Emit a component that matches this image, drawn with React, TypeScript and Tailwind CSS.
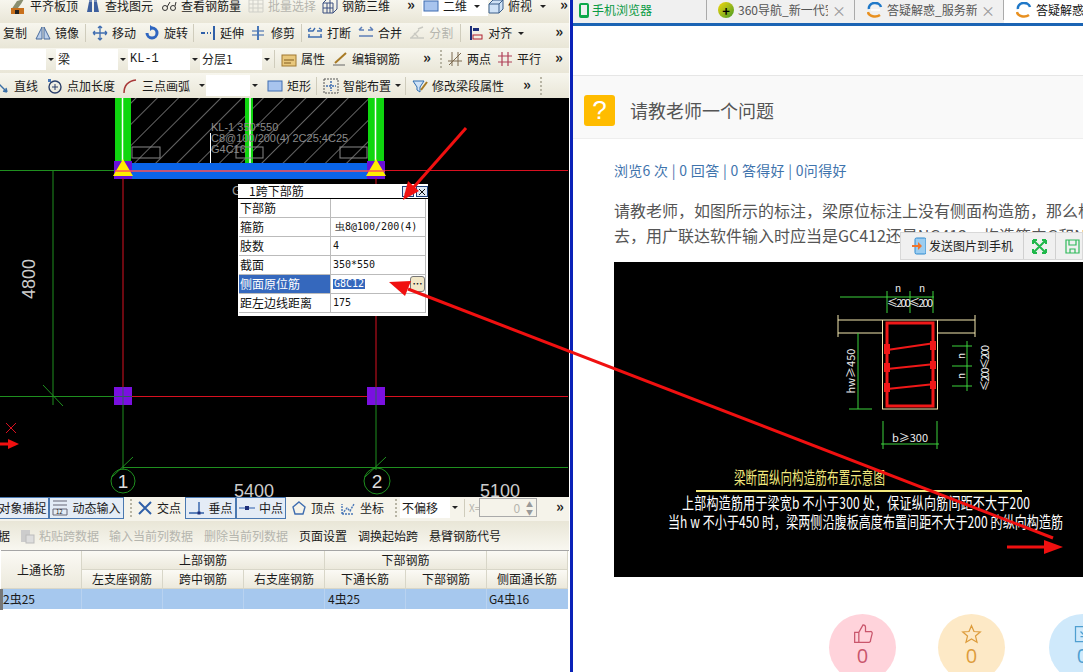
import React from "react";

const cjk = "font-['Noto_Sans_CJK_SC','Liberation_Sans',sans-serif]";

const Svg = ({ children }: { children: React.ReactNode }) => (
  <svg width="16" height="16" viewBox="0 0 16 16" fill="none" className="shrink-0">
    {children}
  </svg>
);

const icons: Record<string, React.ReactNode> = {
  level: (<><path d="M1 12l6-9 7-2-3 5-6 8z" fill="#8a8f70" /><rect x="1" y="10" width="13" height="6" fill="#c8701c" /><rect x="5" y="12" width="4" height="4" fill="#222" /></>),
  binoc: (<><path d="M2 14l2-10h3v10zM9 14V4h3l2 10z" fill="#3d5f9e" /><rect x="4" y="1" width="3" height="3" fill="#7c92bd" /><rect x="9" y="1" width="3" height="3" fill="#7c92bd" /></>),
  glasses: (<><circle cx="4" cy="10" r="2.5" stroke="#333" /><circle cx="12" cy="10" r="2.5" stroke="#333" /><path d="M6 9l3-5M14 8l1-4" stroke="#333" /></>),
  gridOff: (<path d="M1 2h14v12H1zM1 6h14M1 10h14M5 2v12M10 2v12" stroke="#cfcfc8" />),
  rebar3d: (<path d="M1 5h10v10H1zM1 5l4-4h10v10l-4 4M5 5v10M8 1v14M1 10h10" stroke="#3a4f80" />),
  mirror: (<><path d="M7 2v12H1zM9 2v12h6z" stroke="#486a9c" fill="#bcd0ea" /></>),
  move: (<path d="M8 1v14M1 8h14M8 1L6 3M8 1l2 2M8 15l-2-2M8 15l2-2M1 8l2-2M1 8l2 2M15 8l-2-2M15 8l-2 2" stroke="#3f6db0" strokeWidth="1.3" />),
  rotate: (<><path d="M8 3a5 5 0 1 1-5 5" stroke="#2f66c0" strokeWidth="3" /><path d="M6 0v6l4-3z" fill="#2f66c0" /></>),
  extend: (<><path d="M1 8h4M7 8h1M10 8h1" stroke="#2f5fa8" strokeWidth="2" /><path d="M14 1v14" stroke="#2f5fa8" strokeWidth="2" /></>),
  trim: (<><path d="M1 6h12M1 10h12" stroke="#2f5fa8" /><path d="M7 1v14" stroke="#4a78b8" strokeWidth="2" /></>),
  breakLine: (<path d="M1 6h5l2-3M15 6h-5M1 12h14M2 9v3M14 9v3M1 5l3-2M15 5l-3-2" stroke="#3f6db0" strokeWidth="1.4" />),
  merge: (<path d="M1 5h5M10 5h5M1 11h14M1 5l3-3M15 5l-3-3" stroke="#5d7fb8" strokeWidth="1.5" />),
  split: (<path d="M1 13h14M2 13l8-8M5 8l4 4M9 4l5-2" stroke="#c9c9c2" strokeWidth="1.4" />),
  align: (<><path d="M3 1v14" stroke="#1d2f7a" strokeWidth="2" /><rect x="5" y="3" width="6" height="3" fill="#1d2f7a" /><rect x="5" y="10" width="9" height="4" stroke="#b02030" /></>),
  attr: (<><rect x="1" y="4" width="14" height="11" fill="#e8c77c" stroke="#a07830" /><path d="M3 9h10M3 12h7" stroke="#805c20" /></>),
  edit: (<><path d="M1 14h12" stroke="#666" /><path d="M3 12L14 2" stroke="#a87a24" strokeWidth="2" /></>),
  twoPt: (<path d="M2 14L14 2M5 1v14M11 1v14M1 10h14" stroke="#7c6a50" />),
  parallel: (<path d="M1 5h14M1 11h14M5 1v14M11 1v14" stroke="#b04058" strokeWidth="1.2" />),
  line: (<path d="M1 2l12 12M13 14l-4-1M13 14l-1-4" stroke="#3a6ea5" strokeWidth="1.4" />),
  addLen: (<><circle cx="8" cy="9" r="6" stroke="#2a3f6a" strokeWidth="1.4" /><path d="M8 6v6M5 9h6" stroke="#2a3f6a" /><rect x="1" y="1" width="3" height="3" fill="#4a78b8" /></>),
  arc: (<path d="M2 15C2 7 6 3 14 2" stroke="#a83838" strokeWidth="1.5" />),
  rect: (<rect x="1" y="3" width="14" height="10" fill="#a8c4ee" stroke="#3f6db0" />),
  smart: (<><rect x="1" y="1" width="14" height="14" stroke="#555" strokeDasharray="2 1" /><path d="M8 3v10M3 8h10" stroke="#3f6db0" strokeWidth="1.5" strokeDasharray="2 1" /></>),
  modify: (<><path d="M1 3h11L8 9v5L5 12V9z" fill="#cfe2f6" stroke="#2f6db0" /><path d="M9 12l6-8" stroke="#a87a24" strokeWidth="2" /></>),
  flat: (<><rect x="1" y="3" width="14" height="10" fill="#a8c4ee" stroke="#3f6db0" /></>),
  cube: (<><path d="M1 6l4-4h10v9l-4 4H1z" fill="#cfe2f6" stroke="#3a5f8a" /><path d="M1 6h10v9M11 6l4-4" stroke="#3a5f8a" /></>),
  cross: (<path d="M2 2l12 12M14 2L2 14" stroke="#2f5fa8" strokeWidth="2" />),
  perp: (<><path d="M0 13h15M10 2v12" stroke="#2f5fa8" strokeWidth="1.4" /><rect x="8.500" y="11.500" width="3" height="3" fill="#1d2f7a" /></>),
  mid: (<><path d="M0 8h16" stroke="#5d85c0" strokeWidth="1.4" /><rect x="6" y="6" width="4" height="4" fill="#1d2f7a" /></>),
  vertex: (<path d="M8 2l6 5-2 7H4L2 7z" stroke="#3f6db0" strokeWidth="1.4" />),
  coord: (<path d="M2 14V4M2 14h12M2 14l5-6 3 3 4-7" stroke="#4a78b8" strokeDasharray="2 1" strokeWidth="1.4" />),
  dyn: (<><path d="M1 1h14M1 5h14M1 9h14v6H1z" stroke="#667" /><text x="4" y="14" fontSize="6" fill="#222">12</text></>),
  paste: (<><rect x="2" y="2" width="9" height="12" fill="#ccc" /><rect x="7" y="7" width="8" height="8" fill="#ddd" stroke="#bbb" /></>),
};

const Tool = ({ icon, ml, off, children }: { icon?: string; ml: string; off?: boolean; children: React.ReactNode }) => (
  <div className={`flex items-center gap-[4px] shrink-0 whitespace-nowrap ${ml} ${off ? "text-[#b5b5ae]" : "text-[#1a1a1a]"}`}>
    {icon && <Svg>{icons[icon]}</Svg>}
    <span>{children}</span>
  </div>
);

const Sep = ({ ml }: { ml: string }) => <div className={`w-px h-[18px] bg-[#cfccbc] shrink-0 ${ml}`} />;
const Grip = ({ ml }: { ml: string }) => <div className={`w-[2px] h-[18px] shrink-0 border-l-2 border-dotted border-[#b8b5a5] ${ml}`} />;
const More = ({ ml }: { ml: string }) => <span className={`w-[8px] shrink-0 text-[15px] leading-none font-bold text-[#222] -mt-[5px] ${ml}`}>»</span>;
const Caret = ({ ml = "" }: { ml?: string }) => (
  <div className={`w-[8px] shrink-0 flex justify-center ${ml}`}>
    <div className="border-x-[3px] border-x-transparent border-t-[3px] border-t-[#222]" />
  </div>
);
const Combo = ({ w, children }: { w: string; children?: React.ReactNode }) => (
  <div className="flex items-center shrink-0 h-[21px]">
    <div className={`${w} h-[21px] bg-white pl-[2px] flex items-center whitespace-nowrap text-[#1a1a1a]`}>{children}</div>
    <div className="w-[10px] flex justify-center"><Caret /></div>
  </div>
);
const SnapBtn = ({ w, icon, children }: { w: string; icon?: string; children: React.ReactNode }) => (
  <div className={`${w} h-[22px] shrink-0 flex items-center justify-center gap-[4px] bg-[#e4ecf6] border border-[#4a78b0] whitespace-nowrap text-[#1a1a1a]`}>
    {icon && <Svg>{icons[icon]}</Svg>}
    <span>{children}</span>
  </div>
);

const rowBg = "bg-gradient-to-b from-[#f7f6ee] to-[#e9e6d7]";

const Toolbars = () => (
  <div className="text-[12px] leading-none">
    <div className={`h-[23px] pb-[11px] flex items-center ${rowBg}`}>
      <Tool ml="ml-[10px]" icon="level">平齐板顶</Tool>
      <Tool ml="ml-[7px]" icon="binoc">查找图元</Tool>
      <Tool ml="ml-[8px]" icon="glasses">查看钢筋量</Tool>
      <Tool ml="ml-[7px]" icon="gridOff" off>批量选择</Tool>
      <Tool ml="ml-[6px]" icon="rebar3d">钢筋三维</Tool>
      <More ml="ml-[17px]" />
      <div className="ml-[7px] h-[20px] w-[66px] bg-white flex items-center shrink-0">
        <Tool ml="ml-[1px]" icon="flat">二维</Tool>
        <Caret ml="ml-[6px]" />
      </div>
      <Tool ml="ml-[0px]" icon="cube">俯视</Tool>
      <Caret ml="ml-[7px]" />
      <More ml="ml-[13px]" />
    </div>
    <div className={`h-[25px] pb-[5px] flex items-center ${rowBg}`}>
      <Tool ml="ml-[3px]">复制</Tool>
      <Tool ml="ml-[8px]" icon="mirror">镜像</Tool>
      <Sep ml="ml-[6px]" />
      <Tool ml="ml-[6px]" icon="move">移动</Tool>
      <Tool ml="ml-[8px]" icon="rotate">旋转</Tool>
      <Sep ml="ml-[5px]" />
      <Tool ml="ml-[6px]" icon="extend">延伸</Tool>
      <Tool ml="ml-[7px]" icon="trim">修剪</Tool>
      <Sep ml="ml-[6px]" />
      <Tool ml="ml-[5px]" icon="breakLine">打断</Tool>
      <Tool ml="ml-[7px]" icon="merge">合并</Tool>
      <Tool ml="ml-[7px]" icon="split" off>分割</Tool>
      <Sep ml="ml-[7px]" />
      <Tool ml="ml-[7px]" icon="align">对齐</Tool>
      <Caret ml="ml-[5px]" />
      <More ml="ml-[30px]" />
    </div>
    <div className={`h-[25px] pb-[3px] flex items-center ${rowBg}`}>
      <Combo w="w-[46px]" />
      <Combo w="w-[62px]">梁</Combo>
      <Combo w="w-[62px]"><span className="font-['Liberation_Mono',monospace] text-[12px]">KL-1</span></Combo>
      <Combo w="w-[62px]">分层1</Combo>
      <Sep ml="ml-[2px]" />
      <Tool ml="ml-[6px]" icon="attr">属性</Tool>
      <Tool ml="ml-[7px]" icon="edit">编辑钢筋</Tool>
      <More ml="ml-[23px]" />
      <Grip ml="ml-[9px]" />
      <Tool ml="ml-[5px]" icon="twoPt">两点</Tool>
      <Tool ml="ml-[6px]" icon="parallel">平行</Tool>
      <More ml="ml-[14px]" />
    </div>
    <div className={`h-[25px] flex items-center ${rowBg}`}>
      <Tool ml="-ml-[6px]" icon="line">直线</Tool>
      <Tool ml="ml-[9px]" icon="addLen">点加长度</Tool>
      <Tool ml="ml-[7px]" icon="arc">三点画弧</Tool>
      <Caret ml="ml-[8px]" />
      <Combo w="w-[44px]" />
      <Tool ml="ml-[7px]" icon="rect">矩形</Tool>
      <Sep ml="ml-[5px]" />
      <Tool ml="ml-[6px]" icon="smart">智能布置</Tool>
      <Caret ml="ml-[3px]" />
      <Sep ml="ml-[3px]" />
      <Tool ml="ml-[6px]" icon="modify">修改梁段属性</Tool>
      <More ml="ml-[19px]" />
      <Grip ml="ml-[9px]" />
    </div>
  </div>
);

const Canvas = () => (
  <svg viewBox="0 98 569 399" className="block w-[569px] h-[399px] bg-black" fontFamily="'Liberation Sans',sans-serif">
    <defs>
      <pattern id="hatch" width="15" height="15" patternUnits="userSpaceOnUse" patternTransform="rotate(45)">
        <path d="M0 0V15" stroke="#c8c8c8" strokeWidth="1" />
      </pattern>
    </defs>
    <rect x="131" y="98" width="237" height="65" fill="url(#hatch)" />
    <path d="M0 170.500H115M53 170V405M43 385l20 21M0 396.500H123M123 397V470M123 467.500H568M376 397V470M365 477l21-20M112 477l21-20" stroke="#1f8f1f" strokeWidth="1" />
    <rect x="115" y="98" width="16" height="65" fill="#0fd60f" />
    <rect x="368" y="98" width="16" height="65" fill="#0fd60f" />
    <rect x="245" y="98" width="8" height="65" fill="#0fd60f" />
    <path d="M122.500 98V163M375.500 98V163M250 98V170" stroke="#fff" strokeWidth="1.500" />
    <path d="M210.500 133V165" stroke="#fff" />
    <path d="M210.500 165V170" stroke="#e08030" />
    <rect x="132" y="147" width="28" height="11" fill="none" stroke="#888" />
    <rect x="236" y="147" width="27" height="11" fill="none" stroke="#888" />
    <rect x="340" y="147" width="27" height="11" fill="none" stroke="#888" />
    <text x="211" y="131" fontSize="11" fill="#8a8a8a">KL-1 350*550</text>
    <text x="211" y="142" fontSize="11" fill="#8a8a8a">C8@100/200(4) 2C25;4C25</text>
    <text x="211" y="153" fontSize="11" fill="#8a8a8a">G4C16</text>
    <text x="232" y="195" fontSize="13" fill="#999">G</text>
    <rect x="115" y="163" width="270" height="16" fill="#0a64e8" />
    <rect x="114" y="161" width="18" height="18" fill="#6a10d8" />
    <rect x="367" y="161" width="18" height="18" fill="#6a10d8" />
    <path d="M123 159l10 17h-20zM376 159l10 17h-20z" fill="#ffee00" />
    <path d="M115 171H385" stroke="#ff5050" strokeWidth="1.500" />
    <path d="M385 170.500H568M123 178V397M376 178V397M123 396.500H568" stroke="#d81020" strokeWidth="1" />
    <rect x="114" y="387" width="18" height="18" fill="#7a10e0" />
    <rect x="367" y="387" width="18" height="18" fill="#7a10e0" />
    <path d="M123 387V405M376 387V405M114 396.500H132" stroke="#305a60" />
    <circle cx="123" cy="481" r="12" fill="none" stroke="#1f8f1f" />
    <circle cx="377" cy="481" r="13" fill="none" stroke="#1f8f1f" />
    <text x="123" y="488" fontSize="19" fill="#ddd" textAnchor="middle">1</text>
    <text x="377" y="488" fontSize="19" fill="#ddd" textAnchor="middle">2</text>
    <text x="254" y="497" fontSize="18" fill="#ccc" textAnchor="middle">5400</text>
    <text x="500" y="497" fontSize="18" fill="#ccc" textAnchor="middle">5100</text>
    <text transform="translate(35 279) rotate(-90)" fontSize="18" fill="#ccc" textAnchor="middle">4800</text>
    <path d="M6 423l10 10M16 423l-10 10" stroke="#d81020" />
    <path d="M0 444H12" stroke="#f01010" strokeWidth="3" />
    <path d="M8 439l11 5-11 5z" fill="#f01010" />
  </svg>
);

const DialogRow = ({ label, value, active }: { label: string; value?: React.ReactNode; active?: boolean }) => (
  <div className="h-[19px] flex border-b border-[#bbb]">
    <div className={`w-[92px] pl-[1px] flex items-center border-r border-[#bbb] ${active ? "bg-[#3568bd] text-white" : ""}`}>{label}</div>
    <div className="flex-1 pl-[2px] flex items-center font-['DejaVu_Sans_Mono',monospace] text-[10px]">{value}</div>
  </div>
);

const Dialog = () => (
  <div className={`absolute left-[238px] top-[184px] w-[190px] h-[132px] bg-white text-[12px] leading-none text-[#111] ${cjk}`}>
    <div className="h-[15px] flex items-center border-b border-black pl-[11px] relative">
      1跨下部筋
      <div className="absolute left-[164px] top-[2px] w-[12px] h-[11px] border border-[#1d3f7a] bg-[#dfe8f4] flex items-center justify-center">
        <svg width="8" height="6" viewBox="0 0 8 6"><path d="M1 5l3-4 3 4" stroke="#111" fill="none" /></svg>
      </div>
      <div className="absolute left-[178px] top-[2px] w-[12px] h-[11px] border border-[#1d3f7a] bg-[#dfe8f4] flex items-center justify-center">
        <svg width="8" height="8" viewBox="0 0 8 8"><path d="M1 1l6 6M7 1l-6 6" stroke="#111" /></svg>
      </div>
    </div>
    <div className="w-[187px] border-r border-[#bbb] ml-px">
      <DialogRow label="下部筋" />
      <DialogRow label="箍筋" value={<span className="ml-[2px]">虫8@100/200(4)</span>} />
      <DialogRow label="肢数" value="4" />
      <DialogRow label="截面" value="350*550" />
      <div className="relative">
        <DialogRow label="侧面原位筋" active value={<span className="bg-[#3568bd] text-white px-[1px]">G8C12</span>} />
        <div className="absolute left-[171px] top-[1px] w-[15px] h-[16px] rounded-[3px] border border-[#777] bg-[#f2e8c8] flex items-center justify-center text-[10px] font-bold">…</div>
      </div>
      <DialogRow label="距左边线距离" value="175" />
    </div>
  </div>
);

const StatusBar = () => (
  <div className="h-[24px] pb-[3px] flex items-center text-[12px] leading-none bg-[#f5f3ea]">
    <div className="-ml-[4px]"><SnapBtn w="w-[53px]">对象捕捉</SnapBtn></div>
    <SnapBtn w="w-[75px]" icon="dyn">动态输入</SnapBtn>
    <Grip ml="ml-[6px]" />
    <Tool ml="ml-[5px]" icon="cross">交点</Tool>
    <div className="ml-[4px]"><SnapBtn w="w-[51px]" icon="perp">垂点</SnapBtn></div>
    <SnapBtn w="w-[50px]" icon="mid">中点</SnapBtn>
    <Tool ml="ml-[5px]" icon="vertex">顶点</Tool>
    <Tool ml="ml-[5px]" icon="coord">坐标</Tool>
    <Grip ml="ml-[11px]" />
    <div className="ml-[3px]"><Combo w="w-[50px]">不偏移</Combo></div>
    <Sep ml="ml-[4px]" />
    <span className="ml-[4px] w-[10px] text-[10px] text-[#b5b5ae]">X=</span>
    <div className="w-[58px] h-[19px] border border-[#aaa] bg-[#f5f3ea] flex items-center justify-end pr-[16px] text-[#b5b5ae] relative shrink-0">
      0
      <span className="absolute right-[3px] top-[1px] text-[7px] leading-[8px] text-[#999]">▲<br />▼</span>
    </div>
    <More ml="ml-[19px]" />
  </div>
);

const DataBar = () => (
  <div className="h-[29px] flex items-center text-[12px] leading-none bg-gradient-to-b from-[#e9e6d7] to-[#f8f7f0]">
    <Tool ml="-ml-[2px]">据</Tool>
    <Tool ml="ml-[9px]" icon="paste" off>粘贴跨数据</Tool>
    <Tool ml="ml-[10px]" off>输入当前列数据</Tool>
    <Tool ml="ml-[11px]" off>删除当前列数据</Tool>
    <Tool ml="ml-[11px]">页面设置</Tool>
    <Tool ml="ml-[11px]">调换起始跨</Tool>
    <Tool ml="ml-[11px]">悬臂钢筋代号</Tool>
  </div>
);

const headCell = "flex items-center justify-center bg-gradient-to-b from-[#fbfaf5] to-[#ece9dc] border-r border-b border-[#d8d6c8]";
const subHeads = ["左支座钢筋", "跨中钢筋", "右支座钢筋", "下通长筋", "下部钢筋", "侧面通长筋"];

const RebarTable = () => (
  <div className="relative flex-1 bg-white text-[12px] leading-none text-[#1a1a1a]">
    <div className="w-[568px] grid grid-cols-[81px_repeat(6,81px)] grid-rows-[19px_19px_20px] border-t border-[#a5a5a5] ml-[1px]">
      <div className={`row-span-2 ${headCell}`}>上通长筋</div>
      <div className={`col-span-3 ${headCell}`}>上部钢筋</div>
      <div className={`col-span-2 ${headCell}`}>下部钢筋</div>
      <div className={headCell}></div>
      {subHeads.map((h) => (
        <div key={h} className={headCell}>{h}</div>
      ))}
      <div className="bg-[#a6c8ee] border-r border-[#b8d2f0] pl-[2px] flex items-center">2虫25</div>
      <div className="bg-[#a6c8ee] border-r border-[#b8d2f0]" />
      <div className="bg-[#a6c8ee] border-r border-[#b8d2f0]" />
      <div className="bg-[#a6c8ee] border-r border-[#b8d2f0]" />
      <div className="bg-[#a6c8ee] border-r border-[#b8d2f0] pl-[3px] flex items-center">4虫25</div>
      <div className="bg-[#a6c8ee] border-r border-[#b8d2f0]" />
      <div className="bg-[#a6c8ee] pl-[2px] flex items-center">G4虫16</div>
    </div>
    <div className="absolute left-0 top-[39px] w-[3px] h-[21px] bg-[#777]" />
  </div>
);

const Tab = ({ w, color, text }: { w: string; color: string; text: string }) => (
  <div className={`${w} h-[20px] flex items-center pl-[12px] gap-[4px] border-r border-[#aaa] overflow-hidden shrink-0 relative`}>
    <svg width="16" height="16" viewBox="0 0 16 16" className="shrink-0">
      <path d="M2 7a6 5 0 0 1 12-2" stroke="#1f78c8" strokeWidth="2.500" fill="none" />
      <path d="M1 10a7 5 0 0 0 12 3" stroke="#e89020" strokeWidth="2.500" fill="none" />
      <path d="M4 8h9" stroke={color} strokeWidth="1.500" />
    </svg>
    <span className="text-[12px] text-[#555] whitespace-nowrap w-[90px] overflow-hidden">{text}</span>
    <span className="text-[14px] leading-none text-[#999]">×</span>
  </div>
);

const Round = ({ bg, text, ml, children }: { bg: string; text: string; ml: string; children: React.ReactNode }) => (
  <div className={`w-[67px] h-[67px] shrink-0 rounded-full flex flex-col items-center pt-[10px] ${bg} ${text} ${ml}`}>
    {children}
    <span className="text-[20px] leading-[24px] font-['Open_Sans',sans-serif]">0</span>
  </div>
);

const Diagram = () => (
  <svg viewBox="614 261 469 315" className="block w-[469px] h-[315px] bg-black shrink-0" fontFamily="'Noto Sans CJK SC',sans-serif">
    <path d="M838 319H882M938 319H975M838 332H882M938 332H975M838 314V336M975 314V336" stroke="#f5e9b0" />
    <rect x="882.500" y="319" width="55" height="89" fill="none" stroke="#f5e9b0" />
    <rect x="887" y="322" width="46" height="83" fill="none" stroke="#f01818" strokeWidth="3" />
    <path d="M887 349L935 342M887 368L935 363M887 388L935 383" stroke="#f01818" strokeWidth="2" />
    <path d="M884 343h6v10h-6zM930 340h6v9h-6zM884 362h6v9h-6zM930 360h6v8h-6zM884 382h6v9h-6zM930 380h6v8h-6z" fill="#f01818" />
    <path d="M840 296H934M887 290V312M910 290V312M933 290V312M858 332V408M849 408H872M952 345H972M952 365H972M952 385H972M967 340V390M883 420V448M937 420V448M881 443H939" stroke="#3cd23c" />
    <text x="898" y="291" fontSize="10" fill="#eee" textAnchor="middle">n</text>
    <text x="922" y="291" fontSize="10" fill="#eee" textAnchor="middle">n</text>
    <text x="910" y="306" fontSize="11" fill="#eee" textAnchor="middle" textLength="46">≤200≤200</text>
    <text transform="translate(855 370) rotate(-90)" fontSize="11" fill="#eee" textAnchor="middle">hw≥450</text>
    <text transform="translate(965 355) rotate(-90)" fontSize="10" fill="#eee" textAnchor="middle">n</text>
    <text transform="translate(965 375) rotate(-90)" fontSize="10" fill="#eee" textAnchor="middle">n</text>
    <text transform="translate(989 367) rotate(-90)" fontSize="11" fill="#eee" textAnchor="middle" textLength="46">≤200≤200</text>
    <text x="910" y="441" fontSize="11" fill="#eee" textAnchor="middle">b≥300</text>
    <text transform="translate(734 483) scale(1 1.450)" fontSize="11.500" fill="#f2e87c" textLength="151">梁断面纵向构造筋布置示意图</text>
    <path d="M696 490H1022" stroke="#f2e87c" strokeWidth="2" />
    <text transform="translate(682 508) scale(1 1.350)" fontSize="12" fill="#fff" textLength="348">上部构造筋用于梁宽b 不小于300 处，保证纵向筋间距不大于200</text>
    <text transform="translate(668 527) scale(1 1.350)" fontSize="12" fill="#fff" textLength="395">当h w 不小于450 时，梁两侧沿腹板高度布置间距不大于200 的纵向构造筋</text>
  </svg>
);

const Browser = () => (
  <div className={`w-[511px] h-[672px] overflow-hidden bg-white ${cjk}`}>
    <div className="h-[23px] bg-[#f0f0f0] flex">
      <div className="w-[134px] h-[20px] flex items-center pl-[6px] gap-[2px] border-r border-[#aaa] shrink-0">
        <div className="w-[10px] h-[15px] rounded-[2px] border-2 border-b-[3px] border-[#0ea84a]" />
        <span className="text-[12px] leading-none text-[#0a9a44] ml-[1px]">手机浏览器</span>
      </div>
      <div className="w-[148px] h-[20px] flex items-center pl-[11px] gap-[4px] border-r border-[#aaa] overflow-hidden shrink-0">
        <div className="w-[16px] h-[16px] rounded-full bg-gradient-to-br from-[#f4d800] to-[#3a9a20] flex items-center justify-center text-[13px] font-bold leading-none text-black">+</div>
        <span className="text-[12px] text-[#555] whitespace-nowrap w-[90px] overflow-hidden">360导航_新一代安全</span>
        <span className="text-[14px] leading-none text-[#999]">×</span>
      </div>
      <Tab w="w-[149px]" color="#fff" text="答疑解惑_服务新干线" />
      <div className="flex-1 h-[23px] bg-white flex items-center pl-[12px] gap-[4px] whitespace-nowrap overflow-hidden pb-[3px]">
        <svg width="16" height="16" viewBox="0 0 16 16" className="shrink-0">
          <path d="M2 7a6 5 0 0 1 12-2" stroke="#1f78c8" strokeWidth="2.500" fill="none" />
          <path d="M1 10a7 5 0 0 0 12 3" stroke="#e89020" strokeWidth="2.500" fill="none" />
        </svg>
        <span className="text-[12px] text-[#111]">答疑解惑_服务</span>
      </div>
    </div>
    <div className="h-[3px] bg-[#1b64b4]" />
    <div className="h-[50px] border-b border-[#e6e6e6]" />
    <div className="h-[63px] pt-[6px] bg-[#f9f9f9] border-b border-[#eee] flex items-center pl-[11px]">
      <div className="w-[31px] h-[31px] rounded-[3px] bg-[#ffbc00] flex items-center justify-center text-white text-[26px] leading-none font-['Liberation_Sans',sans-serif]">?</div>
      <h1 className="ml-[15px] text-[18px] text-[#555] font-normal leading-none">请教老师一个问题</h1>
    </div>
    <div className="pl-[41px] pt-[21px] whitespace-nowrap">
      <p className="text-[14px] leading-[20px] tracking-[0.3px] text-[#3f74ad]">浏览6 次 | 0 回答 | 0 答得好 | 0问得好</p>
      <p className="mt-[18px] text-[16px] leading-[25px] text-[#555]">请教老师，如图所示的标注，梁原位标注上没有侧面构造筋，那么根据图集要求应当怎么</p>
      <p className="text-[16px] leading-[25px] text-[#555]">去，用广联达软件输入时应当是GC412还是NG412，构造筋中G和N</p>
      <div className="mt-[14px]"><Diagram /></div>
      <div className="mt-[37px] flex">
        <Round bg="bg-[#ffd3db]" text="text-[#c9566c]" ml="ml-[215px]">
          <svg width="20" height="20" viewBox="0 0 24 24" fill="none" stroke="currentColor" strokeWidth="1.500"><path d="M7 10v12M2 10h5v12H2zM7 10l5-9a3 3 0 0 1 3 3v5h6a2 2 0 0 1 2 2.500l-2 8A2 2 0 0 1 19 22H7" /></svg>
        </Round>
        <Round bg="bg-[#fde9c6]" text="text-[#dd9c3c]" ml="ml-[42px]">
          <svg width="21" height="20" viewBox="0 0 24 24" fill="none" stroke="currentColor" strokeWidth="1.500"><path d="M12 2l3 7 7.500.6-5.700 4.900 1.800 7.300L12 18l-6.600 3.800 1.800-7.300L1.500 9.600 9 9z" /></svg>
        </Round>
        <Round bg="bg-[#cfe9fb]" text="text-[#4f9fd0]" ml="ml-[44px]">
          <svg width="20" height="20" viewBox="0 0 24 24" fill="none" stroke="currentColor" strokeWidth="1.500"><path d="M3 3h18v18H3zM9 9l6 6M15 9v6H9" /></svg>
        </Round>
      </div>
    </div>
  </div>
);

const SendBar = () => (
  <div className={`absolute left-[900px] top-[232px] w-[183px] h-[28px] bg-[#f0f0f0] border border-[#d8d8d8] flex items-center text-[12px] leading-none text-[#222] ${cjk}`}>
    <svg width="14" height="18" viewBox="0 0 14 18" className="ml-[11px] shrink-0">
      <rect x="3" y="1" width="11" height="16" rx="1.500" fill="#9ccdf0" stroke="#2f8ad0" />
      <path d="M0 8h6V5l4 4-4 4v-3H0z" fill="#f0742a" />
    </svg>
    <span className="ml-[3px] whitespace-nowrap">发送图片到手机</span>
    <div className="ml-[10px] w-px h-[26px] bg-[#d0d0d0]" />
    <svg width="15" height="15" viewBox="0 0 15 15" className="ml-[8px] shrink-0">
      <path d="M1 1l13 13M14 1L1 14M1 1h4M1 1v4M14 1h-4M14 1v4M1 14h4M1 14v-4M14 14h-4M14 14v-4" stroke="#1fb84a" strokeWidth="2" />
    </svg>
    <div className="ml-[8px] w-px h-[26px] bg-[#d0d0d0]" />
    <svg width="15" height="15" viewBox="0 0 15 15" className="ml-[9px] shrink-0">
      <path d="M1 1h13v13H1zM4 1v5h7V1M5 14v-4h5v4" stroke="#2fba5a" fill="none" strokeWidth="1.200" />
    </svg>
  </div>
);

// hand-drawn red arrows that run over both windows
const Arrows = () => (
  <svg className="absolute left-0 top-0 pointer-events-none" width="1083" height="672" viewBox="0 0 1083 672">
    <path d="M466 128L413 188" stroke="#f01010" strokeWidth="3" />
    <path d="M403 200l5-19 11 10z" fill="#f01010" />
    <path d="M1053 538L408 289" stroke="#f01010" strokeWidth="3" />
    <path d="M389 282l22-1-6 15z" fill="#f01010" />
    <path d="M1007 547H1046" stroke="#f01010" strokeWidth="3" />
    <path d="M1044 540l19 7-19 7z" fill="#f01010" />
  </svg>
);

export default function App() {
  return (
    <div className="relative w-[1083px] h-[672px] overflow-hidden flex bg-white">
      <div className={`w-[569px] h-[672px] shrink-0 flex flex-col overflow-hidden ${cjk}`}>
        <Toolbars />
        <Canvas />
        <StatusBar />
        <DataBar />
        <RebarTable />
      </div>
      <div className="w-px shrink-0 bg-white" />
      <div className="w-[3px] shrink-0 bg-[#0a22b8]" />
      <Browser />
      <Dialog />
      <SendBar />
      <Arrows />
    </div>
  );
}
